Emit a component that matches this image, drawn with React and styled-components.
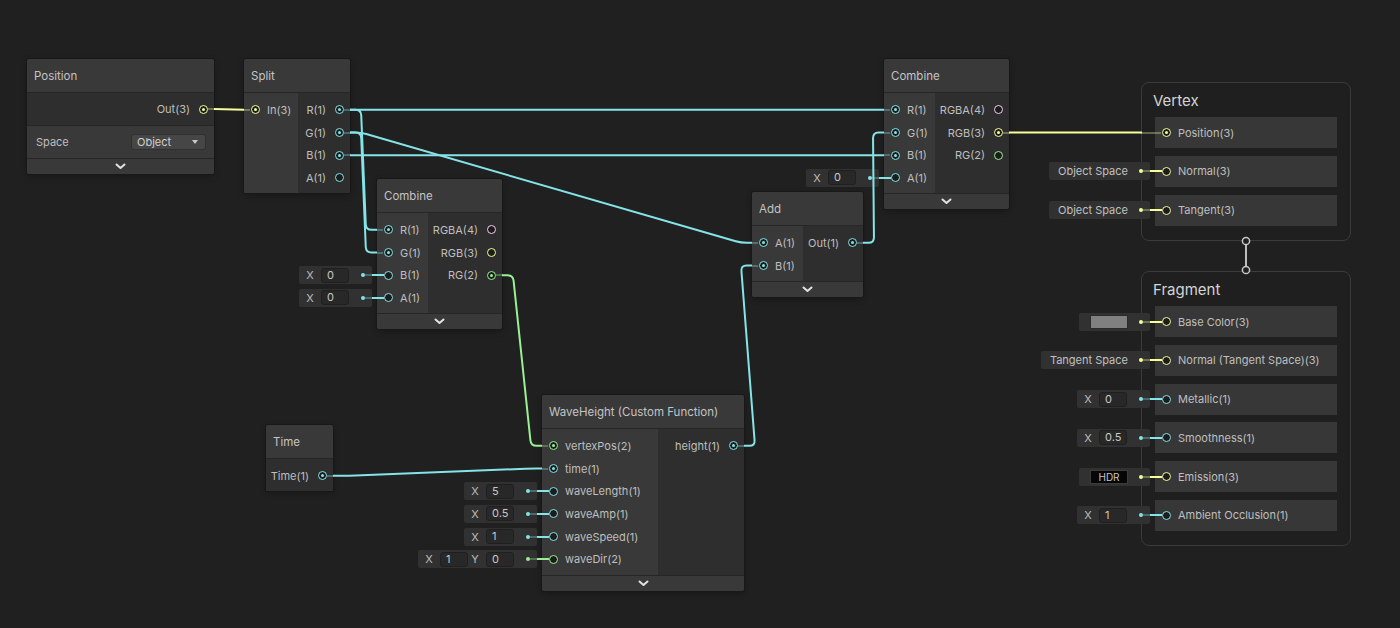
import React from 'react';
import styled, { createGlobalStyle } from 'styled-components';

const COLOR = { float: '#84e4e7', v2: '#9aef92', v3: '#f6ff9a', v4: '#fbcbf4' };
const DIM = {
  float: 'rgba(132,228,231,0.32)',
  v2: 'rgba(154,239,146,0.32)',
  v3: 'rgba(246,255,154,0.32)',
  v4: 'rgba(251,203,244,0.32)',
};

const HEADER = 34;
const PAD_T = 5.5;
const ROW = 22.7;

const GlobalStyle = createGlobalStyle`
  html, body { margin: 0; padding: 0; background: #202020; }
  #root { width: 1400px; height: 628px; }
`;

const Canvas = styled.div`
  position: relative;
  width: 1400px;
  height: 628px;
  overflow: hidden;
  background: #202020;
  font-family: Inter, "Noto Sans", "Liberation Sans", sans-serif;
`;

const Wires = styled.svg`
  position: absolute;
  left: 0;
  top: 0;
  width: 1400px;
  height: 628px;
  z-index: 5;
  pointer-events: none;
`;

const NodeBox = styled.div`
  position: absolute;
  left: ${p => p.$x}px;
  top: ${p => p.$y}px;
  width: ${p => p.$w}px;
  display: flex;
  flex-direction: column;
  background: #2e2e2e;
  box-shadow: 0 0 0 1px #181818, 0 2px 6px rgba(0, 0, 0, 0.3);
  border-radius: 2px;
  z-index: 2;
`;

const Header = styled.div`
  height: ${HEADER}px;
  box-sizing: border-box;
  display: flex;
  align-items: center;
  padding-left: 7px;
  background: #393939;
  border-bottom: 1px solid #262626;
  border-radius: 2px 2px 0 0;
  color: #c4c4c4;
  font-size: 11.5px;
  white-space: nowrap;
`;

const Body = styled.div`
  display: flex;
  align-items: stretch;
`;

const InCol = styled.div`
  width: ${p => p.$w}px;
  flex: none;
  box-sizing: border-box;
  padding: ${PAD_T}px 0 4px;
  background: #393939;
  display: flex;
  flex-direction: column;
`;

const OutCol = styled.div`
  flex: 1;
  padding: ${PAD_T}px 0 4px;
  background: #2e2e2e;
  display: flex;
  flex-direction: column;
`;

const PortRow = styled.div`
  position: relative;
  height: ${p => p.$h || ROW}px;
  flex: none;
  display: flex;
  align-items: center;
  justify-content: ${p => (p.$side === 'out' ? 'flex-end' : 'flex-start')};
  gap: ${p => (p.$side === 'out' ? 8.5 : 7.5)}px;
  padding: ${p => (p.$side === 'out' ? '0 6.5px 0 0' : '0 0 0 6.5px')};
  background: ${p => p.$bg || 'transparent'};
  color: #bfbfbf;
  font-size: 11px;
  white-space: nowrap;
`;

const BlockRow = styled(PortRow)`
  height: 31px;
  background: #373737;
`;

const Port = styled.span`
  position: relative;
  z-index: 1;
  flex: none;
  width: 9px;
  height: 9px;
  box-sizing: border-box;
  border: 1.5px solid ${p => COLOR[p.$t]};
  border-radius: 50%;
  background: #1c1c1c;
  &::after {
    content: '';
    display: ${p => (p.$linked ? 'block' : 'none')};
    position: absolute;
    left: 50%;
    top: 50%;
    width: 3px;
    height: 3px;
    margin: -1.5px 0 0 -1.5px;
    border-radius: 50%;
    background: ${p => COLOR[p.$t]};
  }
  &::before {
    content: '';
    display: ${p => (p.$stub ? 'block' : 'none')};
    position: absolute;
    top: 50%;
    height: 2px;
    margin-top: -1px;
    width: ${p => p.$stub || 0}px;
    ${p => (p.$side === 'out' ? 'left: calc(100% + 1.5px);' : 'right: calc(100% + 1.5px);')}
    background: ${p => DIM[p.$t]};
  }
`;

const ChevronBar = styled.div`
  height: 16px;
  box-sizing: border-box;
  display: flex;
  align-items: center;
  justify-content: center;
  background: #393939;
  border-top: 1px solid #262626;
  border-radius: 0 0 2px 2px;
`;

const ControlRow = styled.div`
  height: 33px;
  box-sizing: border-box;
  display: flex;
  align-items: center;
  justify-content: space-between;
  padding: 0 8px 0 9px;
  background: #393939;
  border-top: 1px solid #262626;
  color: #bfbfbf;
  font-size: 11px;
`;

const Dropdown = styled.div`
  width: 75px;
  height: 16px;
  box-sizing: border-box;
  display: flex;
  align-items: center;
  justify-content: space-between;
  padding: 0 7px 0 5px;
  background: #464646;
  border: 1px solid #303030;
  border-radius: 3px;
  color: #d0d0d0;
  font-size: 11px;
`;

const Caret = styled.span`
  width: 0;
  height: 0;
  border-left: 3.5px solid transparent;
  border-right: 3.5px solid transparent;
  border-top: 4px solid #c8c8c8;
`;

const FieldAttach = styled.div`
  position: absolute;
  top: 50%;
  right: calc(100% - 7px);
  transform: translateY(-50%);
  display: flex;
  align-items: center;
  z-index: 0;
`;

const FieldBox = styled.div`
  height: 18px;
  display: flex;
  align-items: center;
  background: #313131;
  padding-left: ${p => p.$pl}px;
  border-radius: 2px;
  font-size: 11px;
  color: #bdbdbd;
`;

const Axis = styled.span`
  width: 10px;
  text-align: center;
  margin-right: 6px;
`;

const NumInput = styled.span`
  width: 28px;
  height: 15px;
  box-sizing: border-box;
  background: #282828;
  border: 1px solid #1f1f1f;
  border-radius: 3px;
  padding-left: 5px;
  line-height: 13px;
  margin-right: ${p => p.$mr}px;
  color: #c8c8c8;
`;

const FieldText = styled.span`
  margin-right: 4px;
  color: #c0c0c0;
`;

const Swatch = styled.span`
  width: 38px;
  height: 14px;
  box-sizing: border-box;
  margin-right: 4px;
  background: ${p => p.$bg};
  border: 1px solid ${p => p.$border};
  color: #c8c8c8;
  font-size: 10px;
  line-height: 12px;
  text-align: center;
`;

const Tail = styled.span`
  position: relative;
  align-self: stretch;
  width: 18px;
  flex: none;
  &::before {
    content: '';
    position: absolute;
    left: 7px;
    top: 50%;
    width: 4px;
    height: 4px;
    margin-top: -2px;
    border-radius: 50%;
    background: ${p => COLOR[p.$t]};
  }
  &::after {
    content: '';
    position: absolute;
    left: 11px;
    right: 0;
    top: 50%;
    height: 2px;
    margin-top: -1px;
    background: ${p => DIM[p.$t]};
  }
`;

const FieldWire = styled.span`
  width: 12px;
  height: 2px;
  flex: none;
  background: ${p => COLOR[p.$t]};
`;

const Block = styled.div`
  position: absolute;
  left: 1141px;
  top: ${p => p.$y}px;
  width: 210px;
  box-sizing: border-box;
  border: 1px solid #3b3b3b;
  border-radius: 8px;
  background: #1f1f1f;
  padding: 0 13px 14px;
  display: flex;
  flex-direction: column;
  z-index: 2;
`;

const BlockTitle = styled.div`
  height: 34px;
  display: flex;
  align-items: center;
  margin-left: -2px;
  font-size: 15px;
  color: #d4d4d4;
`;

const BlockRows = styled.div`
  display: flex;
  flex-direction: column;
  gap: 7.8px;
`;

const Link = styled.svg`
  position: absolute;
  left: 1241px;
  top: 236px;
  width: 10px;
  height: 40px;
  z-index: 6;
`;

function Chevron() {
  return (
    <svg width="11" height="7" viewBox="0 0 11 7">
      <polyline points="1.5,1.5 5.5,5 9.5,1.5" fill="none" stroke="#e2e2e2" strokeWidth="2" strokeLinecap="round" strokeLinejoin="round" />
    </svg>
  );
}

function Field({ field, t }) {
  let box;
  if (field.kind === 'num') {
    box = (
      <FieldBox $pl={6}>
        {field.values.map(([a, v], i) => (
          <React.Fragment key={a}>
            <Axis>{a}</Axis>
            <NumInput $mr={i === field.values.length - 1 ? 5 : 2}>{v}</NumInput>
          </React.Fragment>
        ))}
        <Tail $t={t} />
      </FieldBox>
    );
  } else if (field.kind === 'text') {
    box = (
      <FieldBox $pl={9}>
        <FieldText>{field.text}</FieldText>
        <Tail $t={t} />
      </FieldBox>
    );
  } else if (field.kind === 'color') {
    box = (
      <FieldBox $pl={11}>
        <Swatch $bg="#808080" $border="#2a2a2a" />
        <Tail $t={t} />
      </FieldBox>
    );
  } else {
    box = (
      <FieldBox $pl={11}>
        <Swatch $bg="#060606" $border="#3c3c3c">HDR</Swatch>
        <Tail $t={t} />
      </FieldBox>
    );
  }
  return (
    <FieldAttach>
      {box}
      <FieldWire $t={t} />
    </FieldAttach>
  );
}

function InPort({ p, Row = PortRow, stub = 6.5 }) {
  return (
    <Row $side="in">
      {p.field && <Field field={p.field} t={p.t} />}
      <Port $t={p.t} $linked={p.linked} $side="in" $stub={p.linked ? stub : 0} />
      <span>{p.label}</span>
    </Row>
  );
}

function OutPort({ p }) {
  return (
    <PortRow $side="out">
      <span>{p.label}</span>
      <Port $t={p.t} $linked={p.linked} $side="out" $stub={p.linked ? 6.5 : 0} />
    </PortRow>
  );
}

function GraphNode({ node }) {
  const { x, y, w, inW, title, inputs, outputs, collapse } = node;
  return (
    <NodeBox $x={x} $y={y} $w={w}>
      <Header>{title}</Header>
      <Body>
        {inputs.length > 0 && (
          <InCol $w={inW}>
            {inputs.map(p => (
              <InPort key={p.label} p={p} />
            ))}
          </InCol>
        )}
        <OutCol>
          {outputs.map(p => (
            <OutPort key={p.label} p={p} />
          ))}
        </OutCol>
      </Body>
      {collapse && (
        <ChevronBar>
          <Chevron />
        </ChevronBar>
      )}
    </NodeBox>
  );
}

const num = (...values) => ({ kind: 'num', values });

const split = {
  x: 244, y: 59, w: 106, inW: 54, title: 'Split', collapse: false,
  inputs: [{ t: 'v3', label: 'In(3)', linked: true }],
  outputs: [
    { t: 'float', label: 'R(1)', linked: true },
    { t: 'float', label: 'G(1)', linked: true },
    { t: 'float', label: 'B(1)', linked: true },
    { t: 'float', label: 'A(1)' },
  ],
};

const combineA = {
  x: 377, y: 179, w: 125, inW: 51, title: 'Combine', collapse: true,
  inputs: [
    { t: 'float', label: 'R(1)', linked: true },
    { t: 'float', label: 'G(1)', linked: true },
    { t: 'float', label: 'B(1)', field: num(['X', '0']) },
    { t: 'float', label: 'A(1)', field: num(['X', '0']) },
  ],
  outputs: [
    { t: 'v4', label: 'RGBA(4)' },
    { t: 'v3', label: 'RGB(3)' },
    { t: 'v2', label: 'RG(2)', linked: true },
  ],
};

const addNode = {
  x: 752, y: 192, w: 111, inW: 51, title: 'Add', collapse: true,
  inputs: [
    { t: 'float', label: 'A(1)', linked: true },
    { t: 'float', label: 'B(1)', linked: true },
  ],
  outputs: [{ t: 'float', label: 'Out(1)', linked: true }],
};

const combineB = {
  x: 884, y: 59, w: 125, inW: 51, title: 'Combine', collapse: true,
  inputs: [
    { t: 'float', label: 'R(1)', linked: true },
    { t: 'float', label: 'G(1)', linked: true },
    { t: 'float', label: 'B(1)', linked: true },
    { t: 'float', label: 'A(1)', field: num(['X', '0']) },
  ],
  outputs: [
    { t: 'v4', label: 'RGBA(4)' },
    { t: 'v3', label: 'RGB(3)', linked: true },
    { t: 'v2', label: 'RG(2)' },
  ],
};

const wave = {
  x: 542, y: 395, w: 202, inW: 116, title: 'WaveHeight (Custom Function)', collapse: true,
  inputs: [
    { t: 'v2', label: 'vertexPos(2)', linked: true },
    { t: 'float', label: 'time(1)', linked: true },
    { t: 'float', label: 'waveLength(1)', field: num(['X', '5']) },
    { t: 'float', label: 'waveAmp(1)', field: num(['X', '0.5']) },
    { t: 'float', label: 'waveSpeed(1)', field: num(['X', '1']) },
    { t: 'v2', label: 'waveDir(2)', field: num(['X', '1'], ['Y', '0']) },
  ],
  outputs: [{ t: 'float', label: 'height(1)', linked: true }],
};

const timeNode = {
  x: 266, y: 425, w: 67, title: 'Time', collapse: false,
  inputs: [],
  outputs: [{ t: 'float', label: 'Time(1)', linked: true }],
};

const rowY = (n, i) => n.y + HEADER + PAD_T + ROW * (i + 0.5);
const inP = (n, i) => ({ x: n.x + 11, y: rowY(n, i), e: n.x });
const outP = (n, i) => ({ x: n.x + n.w - 11, y: rowY(n, i), e: n.x + n.w });
const positionOut = { x: 203, y: 109, e: 214 };
const vertexPos = { x: 1166, y: 132.5, e: 1142 };

const edges = [
  { t: 'v3', a: positionOut, b: inP(split, 0) },
  { t: 'float', a: outP(split, 0), b: inP(combineB, 0) },
  { t: 'float', a: outP(split, 0), b: inP(combineA, 0) },
  { t: 'float', a: outP(split, 1), b: inP(combineA, 1) },
  { t: 'float', a: outP(split, 1), b: inP(addNode, 0) },
  { t: 'float', a: outP(split, 2), b: inP(combineB, 2) },
  { t: 'float', a: outP(addNode, 0), b: inP(combineB, 1) },
  { t: 'v3', a: outP(combineB, 1), b: vertexPos },
  { t: 'v2', a: outP(combineA, 2), b: inP(wave, 0) },
  { t: 'float', a: outP(timeNode, 0), b: inP(wave, 1) },
  { t: 'float', a: outP(wave, 0), b: inP(addNode, 1) },
];

function wirePath(a, b, d = 22, r = 6) {
  if (Math.abs(a.y - b.y) < 1.5) return `M${a.e} ${a.y} L${b.e} ${b.y}`;
  const pts = [
    [a.e, a.y],
    [a.x + d, a.y],
    [b.x - d, b.y],
    [b.e, b.y],
  ];
  let path = `M${pts[0][0]} ${pts[0][1]}`;
  for (let i = 1; i < pts.length - 1; i++) {
    const [px, py] = pts[i - 1];
    const [cx, cy] = pts[i];
    const [nx, ny] = pts[i + 1];
    const l1 = Math.hypot(cx - px, cy - py);
    const l2 = Math.hypot(nx - cx, ny - cy);
    const rr = Math.min(r, l1 / 2, l2 / 2);
    const ax = cx + ((px - cx) * rr) / l1;
    const ay = cy + ((py - cy) * rr) / l1;
    const bx = cx + ((nx - cx) * rr) / l2;
    const by = cy + ((ny - cy) * rr) / l2;
    path += ` L${ax} ${ay} Q${cx} ${cy} ${bx} ${by}`;
  }
  path += ` L${pts[3][0]} ${pts[3][1]}`;
  return path;
}

const vertexRows = [
  { t: 'v3', label: 'Position(3)', linked: true },
  { t: 'v3', label: 'Normal(3)', field: { kind: 'text', text: 'Object Space' } },
  { t: 'v3', label: 'Tangent(3)', field: { kind: 'text', text: 'Object Space' } },
];

const fragmentRows = [
  { t: 'v3', label: 'Base Color(3)', field: { kind: 'color' } },
  { t: 'v3', label: 'Normal (Tangent Space)(3)', field: { kind: 'text', text: 'Tangent Space' } },
  { t: 'float', label: 'Metallic(1)', field: num(['X', '0']) },
  { t: 'float', label: 'Smoothness(1)', field: num(['X', '0.5']) },
  { t: 'v3', label: 'Emission(3)', field: { kind: 'hdr' } },
  { t: 'float', label: 'Ambient Occlusion(1)', field: num(['X', '1']) },
];

function ContextBlock({ y, title, rows }) {
  return (
    <Block $y={y}>
      <BlockTitle>{title}</BlockTitle>
      <BlockRows>
        {rows.map(p => (
          <InPort key={p.label} p={p} Row={BlockRow} stub={20.5} />
        ))}
      </BlockRows>
    </Block>
  );
}

export default function App() {
  return (
    <>
      <GlobalStyle />
      <Canvas>
        <NodeBox $x={27} $y={59} $w={187}>
          <Header>Position</Header>
          <PortRow $side="out" $h={32} $bg="#2e2e2e">
            <span>Out(3)</span>
            <Port $t="v3" $linked $side="out" $stub={6.5} />
          </PortRow>
          <ControlRow>
            <span>Space</span>
            <Dropdown>
              <span>Object</span>
              <Caret />
            </Dropdown>
          </ControlRow>
          <ChevronBar>
            <Chevron />
          </ChevronBar>
        </NodeBox>

        <GraphNode node={split} />
        <GraphNode node={combineA} />
        <GraphNode node={addNode} />
        <GraphNode node={combineB} />
        <GraphNode node={wave} />
        <GraphNode node={timeNode} />

        <ContextBlock y={82} title="Vertex" rows={vertexRows} />
        <ContextBlock y={271} title="Fragment" rows={fragmentRows} />

        <Link viewBox="0 0 10 40">
          <line x1="5" y1="9" x2="5" y2="30" stroke="#bdbdbd" strokeWidth="2" />
          <circle cx="5" cy="5" r="3.6" fill="#1f1f1f" stroke="#c8c8c8" strokeWidth="1.5" />
          <circle cx="5" cy="34" r="3.6" fill="#1f1f1f" stroke="#c8c8c8" strokeWidth="1.5" />
        </Link>

        <Wires viewBox="0 0 1400 628">
          {edges.map((ed, i) => (
            <path key={i} d={wirePath(ed.a, ed.b)} fill="none" stroke={COLOR[ed.t]} strokeWidth="2" strokeLinejoin="round" />
          ))}
        </Wires>
      </Canvas>
    </>
  );
}
